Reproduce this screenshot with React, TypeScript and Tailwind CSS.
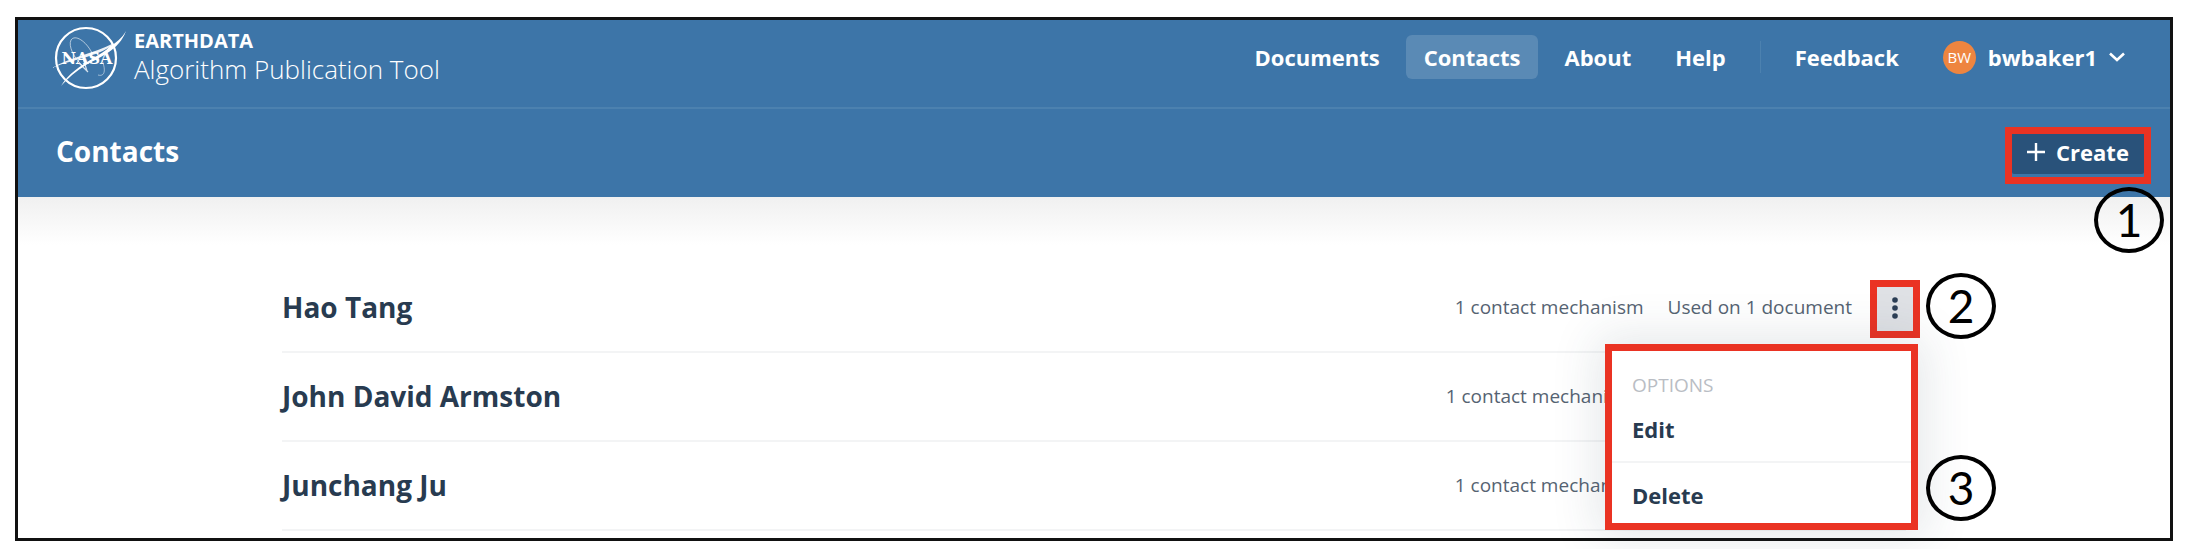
import type { ReactNode } from "react";

type Contact = { name: string; usage: string };

const contacts: Contact[] = [
  { name: "Hao Tang", usage: "Used on 1 document" },
  { name: "John David Armston", usage: "Used on 2 documents" },
  { name: "Junchang Ju", usage: "Used on 1 document" },
];

function NasaLogo() {
  return (
    <svg viewBox="0 0 76 66" className="h-[66px] w-[76px] shrink-0" aria-hidden="true">
      <g fill="none" stroke="#fff">
        <circle cx="34" cy="32" r="30" strokeWidth="2.2" />
        <path d="M30 39 C22 32 16 20 19 14 C23 8 34 15 40 27" strokeWidth="1" opacity=".6" />
        <path d="M50 34 C54 44 53 51 46 49" strokeWidth="1" opacity=".5" />
        <path d="M27 37 L36 46 M31 32 L35 45" strokeWidth="1.2" opacity=".8" />
      </g>
      <path d="M74 5 C67 24 50 30 34 39 C24 45 16 52 9 60 C16 48 28 40 40 33 C48 28 54 25 58 20 C64 17 70 12 74 5Z" fill="#fff" />
      <path d="M0 42 C18 31 41 28 62 17 C50 30 24 32 0 42Z" fill="#fff" opacity=".9" />
      <text x="35" y="38" textAnchor="middle" fill="#fff" className="font-['DejaVu_Serif',serif] text-[16px] font-bold">
        NASA
      </text>
    </svg>
  );
}

function NavLink({ children, active = false }: { children: ReactNode; active?: boolean }) {
  return (
    <a
      href="#"
      className={
        active
          ? "flex h-11 items-center rounded-md bg-[#5a8ab5] px-[18px]"
          : "flex h-11 items-center rounded-md px-[18px]"
      }
    >
      {children}
    </a>
  );
}

function Marker({ children }: { children: ReactNode }) {
  return (
    <span className="flex h-[66px] w-[70px] items-center justify-center rounded-[50%] border-4 border-black font-[Lato,sans-serif] text-[46px] leading-none text-black">
      {children}
    </span>
  );
}

function OptionsMenu() {
  return (
    <div
      role="menu"
      className="absolute top-20 right-[-12px] z-10 w-[313px] border-[7px] border-[#ea3323] bg-white shadow-[0_0_44px_8px_rgba(44,62,80,0.12)]"
    >
      <p className="px-5 pt-5 text-[19px] leading-7 text-[#b9bdc4]">OPTIONS</p>
      <button role="menuitem" className="block w-full px-5 pt-4 pb-[18px] text-left text-[22px] leading-7 font-bold">
        Edit
      </button>
      <button role="menuitem" className="block w-full border-t-2 border-[#f3f4f5] px-5 pt-[18px] pb-[14px] text-left text-[22px] leading-7 font-bold">
        Delete
      </button>
      <div className="absolute bottom-[2px] left-[314px]">
        <Marker>3</Marker>
      </div>
    </div>
  );
}

function ContactRow({ contact, open }: { contact: Contact; open: boolean }) {
  return (
    <li className="relative flex h-[89px] items-center justify-between border-b-2 border-[#f3f4f5]">
      <h2 className="pb-[2px] text-[28px] leading-9 font-bold">{contact.name}</h2>
      <div className="flex items-center gap-6 text-[19px] text-[#566372]">
        <span>1 contact mechanism</span>
        <span>{contact.usage}</span>
        <span className="w-[30px]" />
      </div>
      {open && (
        <>
          <button
            aria-label="Contact options"
            className="absolute top-4 right-[-14px] flex h-[58px] w-[50px] items-center justify-center border-[7px] border-[#ea3323] bg-[#dfe1e5]"
          >
            <svg viewBox="0 0 6 24" className="h-6 w-[6px]" fill="#2c3e55" aria-hidden="true">
              <circle cx="3" cy="3" r="2.8" />
              <circle cx="3" cy="11" r="2.8" />
              <circle cx="3" cy="19" r="2.8" />
            </svg>
          </button>
          <div className="absolute top-[9px] right-[-90px]">
            <Marker>2</Marker>
          </div>
          <OptionsMenu />
        </>
      )}
    </li>
  );
}

export default function App() {
  return (
    <div className="bg-white pt-[17px] pr-[13px] pb-2 pl-[15px] font-['Open_Sans',sans-serif] text-[#283b50]">
      <div className="border-[3px] border-[#111]">
        <header className="bg-[#3d75a8] text-white">
          <div className="flex h-[89px] items-start justify-between border-b-2 border-[#4c81af] pt-[6px] pr-[45px] pl-[34px]">
            <a href="#" className="flex items-start gap-[6px]">
              <NasaLogo />
              <span className="flex flex-col pt-[3px]">
                <span className="text-[20px] leading-6 font-bold">EARTHDATA</span>
                <span className="text-[26px] leading-8 font-light">Algorithm Publication Tool</span>
              </span>
            </a>
            <nav className="flex items-center gap-2 pt-[9px] text-[22px] font-bold">
              <NavLink>Documents</NavLink>
              <NavLink active>Contacts</NavLink>
              <NavLink>About</NavLink>
              <NavLink>Help</NavLink>
              <span className="mx-2 h-8 w-px bg-[#4c81af]" />
              <NavLink>Feedback</NavLink>
              <button className="flex items-center gap-3 pl-[18px]">
                <span className="flex size-[33px] items-center justify-center rounded-full bg-[#ee8540] text-[15px] font-normal">
                  BW
                </span>
                <span>bwbaker1</span>
                <svg viewBox="0 0 16 10" className="h-[10px] w-4" fill="none" stroke="#fff" strokeWidth="2.6" aria-hidden="true">
                  <path d="M1 1.5 L8 8 L15 1.5" />
                </svg>
              </button>
            </nav>
          </div>
          <div className="flex h-[88px] items-start justify-between pt-[18px] pr-[19px] pl-[38px]">
            <h1 className="pt-[6px] text-[28px] leading-9 font-bold">Contacts</h1>
            <div className="relative">
              <div className="border-[7px] border-[#ea3323] bg-[#3d75a8] pb-[3px]">
                <button className="flex h-10 w-[132px] items-center justify-center gap-[11px] rounded-b-xs bg-[#29527a] pb-1 text-[22px] font-bold">
                  <svg viewBox="0 0 18 18" className="size-[18px]" stroke="#fff" strokeWidth="2.4" aria-hidden="true">
                    <path d="M9 0V18M0 9H18" />
                  </svg>
                  Create
                </button>
              </div>
              <div className="absolute top-[60px] right-[-13px]">
                <Marker>1</Marker>
              </div>
            </div>
          </div>
        </header>
        <main className="bg-linear-to-b from-[#f0f0f0] from-0% to-white to-[48px] px-[264px] pt-[67px] pb-[7px]">
          <ul>
            {contacts.map((contact, index) => (
              <ContactRow key={contact.name} contact={contact} open={index === 0} />
            ))}
          </ul>
        </main>
      </div>
    </div>
  );
}
